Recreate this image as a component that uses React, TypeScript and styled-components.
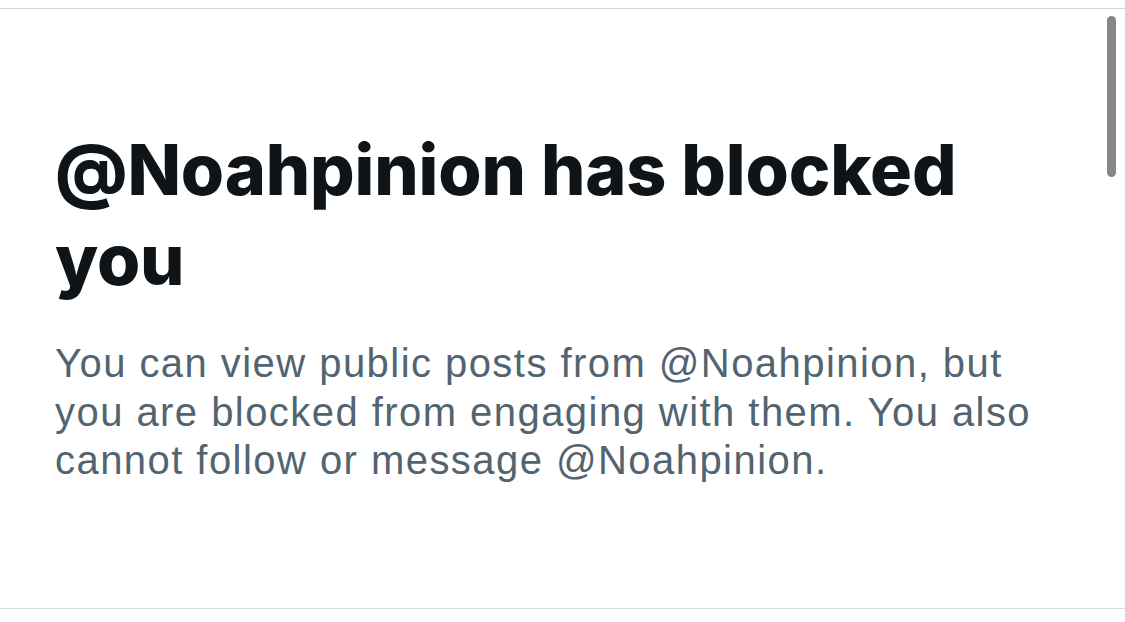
import styled, { createGlobalStyle } from 'styled-components';

const GlobalStyle = createGlobalStyle`
  html, body {
    margin: 0;
    padding: 0;
    background: #ffffff;
  }
  body {
    font-family: "Liberation Sans", Arial, sans-serif;
  }
`;

const Screen = styled.div`
  position: relative;
  width: 1125px;
  height: 622px;
  padding-top: 8px;
  box-sizing: border-box;
  background: #ffffff;
  overflow: hidden;
`;

const Panel = styled.section`
  height: 601px;
  box-sizing: border-box;
  border-top: 1px solid #d6d6d6;
  border-bottom: 1px solid #dcdcdc;
  padding: 116px 60px 0 55px;
`;

const Title = styled.h1`
  margin: 0;
  font-family: Inter, "Liberation Sans", sans-serif;
  font-size: 70px;
  line-height: 90px;
  font-weight: 800;
  color: #0f1419;
  letter-spacing: -0.15px;
`;

const Message = styled.p`
  margin: 34px 0 0;
  font-size: 40px;
  line-height: 48.5px;
  font-weight: 400;
  color: #536471;
  letter-spacing: 1.45px;
`;

const ScrollThumb = styled.div`
  position: absolute;
  top: 16px;
  right: 9px;
  width: 9px;
  height: 161px;
  border-radius: 5px;
  background: #878787;
`;

export default function App() {
  return (
    <Screen>
      <GlobalStyle />
      <Panel>
        <Title>
          @Noahpinion has blocked
          <br />
          you
        </Title>
        <Message>
          You can view public posts from @Noahpinion, but
          <br />
          you are blocked from engaging with them. You also
          <br />
          cannot follow or message @Noahpinion.
        </Message>
      </Panel>
      <ScrollThumb />
    </Screen>
  );
}
